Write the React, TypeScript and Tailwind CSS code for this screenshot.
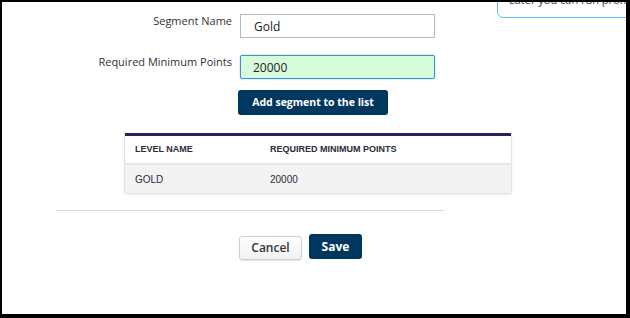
import React from 'react';

// segment form with a small preview table
const App: React.FC = () => {
  return (
    <div className="w-[630px] h-[318px] bg-black pl-[2px] pt-[2px] pr-[4px] pb-[4px]">
      <div className="relative w-full h-full bg-white overflow-hidden font-['Open_Sans',sans-serif] text-[#333]">
        {/* tip card, cut off by the frame */}
        <div className="absolute left-[495px] top-[-40px] w-[200px] h-[56px] border-[1.5px] border-[#62bdee] rounded-[6px] bg-white px-[11px] pb-[9px] flex items-end">
          <p className="text-[11px] leading-4 text-[#444] whitespace-nowrap">Later you can run promotions</p>
        </div>

        <div className="pt-[10px]">
          <div className="grid grid-cols-[230px_195px] gap-x-2 gap-y-[15px] items-start">
            <label className="text-right text-[11px] leading-4 pt-[1px]">Segment Name</label>
            <input
              readOnly
              value="Gold"
              className="mt-[2px] h-6 w-[195px] border border-[#b8b8b8] bg-white px-[13px] text-[12px] text-[#222] outline-none"
            />
            <label className="text-right text-[11px] leading-4 pt-[1px]">Required Minimum Points</label>
            <input
              readOnly
              value="20000"
              className="mt-[2px] h-6 w-[195px] border border-[#3e8fd0] rounded-[2px] bg-[#d6fcdb] px-[12px] text-[12px] text-[#222] outline-none shadow-[0_0_2px_rgba(62,143,208,0.5)]"
            />
            <div />
            <button className="-mt-[4px] -ml-[2px] w-[150px] h-[25px] rounded-[3px] bg-[#00375f] text-white text-[10.5px] font-bold">
              Add segment to the list
            </button>
          </div>

          <div className="ml-[122px] mt-[18px] w-[388px] border border-[#e2e2e2] border-t-0 rounded-b-[3px] shadow-[0_1px_2px_rgba(0,0,0,0.08)] font-['Liberation_Sans',Arial,sans-serif]">
            <div className="h-[3px] bg-[#26235a]" />
            <div className="grid grid-cols-[145px_1fr] h-[29px] items-center bg-white border-b-2 border-[#e6e6e6] text-[9px] font-bold text-[#2a2a3a]">
              <span className="pl-[10px]">LEVEL NAME</span>
              <span>REQUIRED MINIMUM POINTS</span>
            </div>
            <div className="grid grid-cols-[145px_1fr] h-[28px] items-center bg-[#f3f3f3] text-[10px] text-[#2a2a3a]">
              <span className="pl-[10px]">GOLD</span>
              <span>20000</span>
            </div>
          </div>

          <div className="ml-[54px] mt-[16px] w-[388px] h-px bg-[#d6d6d6]" />

          <div className="flex items-start ml-[237px] mt-[23px] gap-[7px]">
            <button className="mt-[2px] w-[63px] h-6 rounded-[3px] border border-[#cfcfcf] bg-gradient-to-b from-white to-[#f2f2f2] shadow-[0_1px_1px_rgba(0,0,0,0.1)] text-[12px] font-semibold text-[#333]">
              Cancel
            </button>
            <button className="w-[53px] h-[25px] rounded-[3px] bg-[#00375f] text-white text-[12px] font-bold">
              Save
            </button>
          </div>
        </div>
      </div>
    </div>
  );
};

export default App;
